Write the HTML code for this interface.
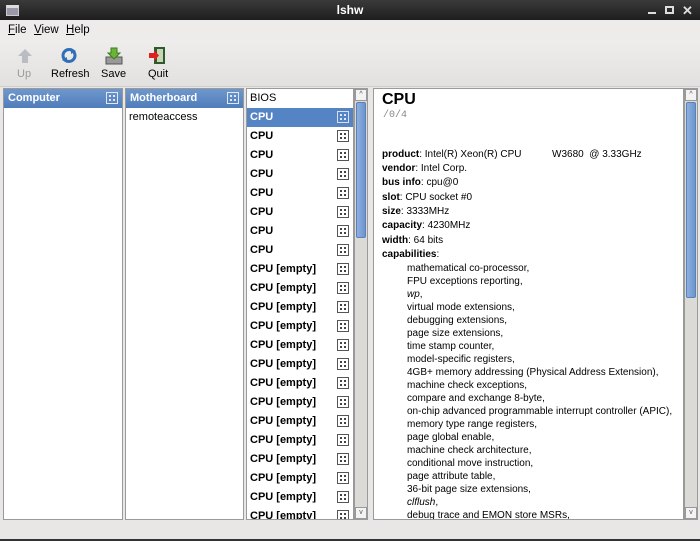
<!DOCTYPE html>
<html><head><style>
*{margin:0;padding:0;box-sizing:border-box}
body{width:700px;height:541px;background:#e8e7e6;font-family:"Liberation Sans",sans-serif;font-size:11px;color:#000;position:relative;overflow:hidden}
.a{position:absolute}
.title{left:0;top:0;width:700px;height:20px;background:linear-gradient(#3a3a3a,#1e1e1e);color:#fff;font-weight:bold;font-size:12px;text-align:center;line-height:20px}
.menu{top:20px;left:0;width:700px;height:20px;background:#edeceb}
.menu span{position:absolute;top:4px;font-size:11.5px}
.tb{top:40px;left:0;width:700px;height:47px;background:linear-gradient(#eeedec,#e2e1e0);border-bottom:1px solid #cfcdca}
.tb .l{position:absolute;top:28px;font-size:11px;text-align:center}
.pane{background:#fff;border:1px solid #9a9a9a}
.hdr{background:linear-gradient(#6f97cc,#4f7dbb);color:#fff;font-weight:bold;height:19px;line-height:19px;padding-left:4px;font-size:11px;position:relative}
.ic{position:absolute;width:12px;height:12px;border:1px solid #555;top:3px;background-color:#fff;background-image:radial-gradient(circle,#333 0,#333 1px,transparent 1.2px);background-size:4px 4px;background-position:1px 1px;background-clip:content-box;padding:1px}
.hdr .ic{border-color:#dfe7f3;background-color:transparent;background-image:radial-gradient(circle,#eef 0,#eef 1px,transparent 1.2px)}
.row{height:19px;line-height:19px;padding-left:3px;font-weight:bold;position:relative}
.row .ic{right:4px}
.sel{background:#5584c4;color:#fff}
.sb{background:#dcdad7;border:1px solid #9a9a9a}
.thumb{position:absolute;left:1px;width:10px;background:linear-gradient(90deg,#8fb0de,#6b95cf);border:1px solid #5a80b8;border-radius:2px}
.btn{position:absolute;left:0;width:12px;height:12px;background:#f3f3f3;border:1px solid #999;font-size:7px;text-align:center;line-height:10px;color:#555}
.d{position:absolute;left:382px;font-size:10px;white-space:pre}
.d b{font-weight:bold}
.c{position:absolute;left:407px;font-size:10px;white-space:nowrap}
</style></head><body>
<div class="a title">lshw
<div class="a" style="left:6px;top:5px;width:13px;height:11px;border:1px solid #ccc;background:#99a;border-top:3px solid #ddd"></div>
<div class="a" style="left:648px;top:12px;width:8px;height:2px;background:#ddd"></div>
<div class="a" style="left:665px;top:6px;width:9px;height:8px;border:2px solid #ddd"></div>
<div class="a" style="left:682px;top:1px;font-size:13px;color:#ddd">✕</div>
</div>
<div class="a menu"><span style="left:8px"><u>F</u>ile</span><span style="left:34px"><u>V</u>iew</span><span style="left:66px"><u>H</u>elp</span></div>
<div class="a tb">
<svg class="a" style="left:17px;top:8px" width="16" height="16"><path d="M8 1L15 8H11V15H5V8H1Z" fill="#b9bcc0"/></svg>
<div class="l" style="left:17px;color:#9a9a9a">Up</div>
<svg class="a" style="left:61px;top:7px" width="16" height="17"><circle cx="8" cy="8.5" r="6" fill="none" stroke="#2f6fb8" stroke-width="3"/><path d="M10 1L15 4 10 7Z M6 10L1 13 6 16Z" fill="#2f6fb8"/></svg>
<div class="l" style="left:51px">Refresh</div>
<svg class="a" style="left:105px;top:7px" width="18" height="18"><rect x="1" y="10" width="16" height="7" fill="#999" stroke="#555"/><path d="M6 1H12V6H15L9 12 3 6H6Z" fill="#6bb33a" stroke="#3d7d1c"/></svg>
<div class="l" style="left:101px">Save</div>
<svg class="a" style="left:148px;top:6px" width="18" height="19"><rect x="6" y="1" width="11" height="17" fill="#2e5a2e"/><rect x="9" y="3" width="6" height="13" fill="#c8d6b8"/><path d="M1 7H6V4L11 9.5 6 15V12H1Z" fill="#e02020"/></svg>
<div class="l" style="left:148px">Quit</div>
</div>

<div class="a pane" style="left:3px;top:88px;width:120px;height:432px">
<div class="hdr">Computer<div class="ic" style="right:4px"></div></div></div>
<div class="a pane" style="left:125px;top:88px;width:119px;height:432px">
<div class="hdr">Motherboard<div class="ic" style="right:4px"></div></div>
<div style="padding:3px 3px;font-size:11px">remoteaccess</div></div>

<div class="a pane" style="left:246px;top:88px;width:108px;height:432px;overflow:hidden">
<div class="row" style="font-weight:normal">BIOS</div>
<div class="row sel">CPU<div class="ic" style="border-color:#dde;background-color:transparent;background-image:radial-gradient(circle,#eef 0,#eef 1px,transparent 1.2px)"></div></div>
<div class="row">CPU<div class="ic"></div></div>
<div class="row">CPU<div class="ic"></div></div>
<div class="row">CPU<div class="ic"></div></div>
<div class="row">CPU<div class="ic"></div></div>
<div class="row">CPU<div class="ic"></div></div>
<div class="row">CPU<div class="ic"></div></div>
<div class="row">CPU<div class="ic"></div></div>
<div class="row">CPU [empty]<div class="ic"></div></div>
<div class="row">CPU [empty]<div class="ic"></div></div>
<div class="row">CPU [empty]<div class="ic"></div></div>
<div class="row">CPU [empty]<div class="ic"></div></div>
<div class="row">CPU [empty]<div class="ic"></div></div>
<div class="row">CPU [empty]<div class="ic"></div></div>
<div class="row">CPU [empty]<div class="ic"></div></div>
<div class="row">CPU [empty]<div class="ic"></div></div>
<div class="row">CPU [empty]<div class="ic"></div></div>
<div class="row">CPU [empty]<div class="ic"></div></div>
<div class="row">CPU [empty]<div class="ic"></div></div>
<div class="row">CPU [empty]<div class="ic"></div></div>
<div class="row">CPU [empty]<div class="ic"></div></div>
<div class="row">CPU [empty]<div class="ic"></div></div>
<div class="row">CPU [empty]<div class="ic"></div></div>
</div>
<div class="a sb" style="left:354px;top:88px;width:14px;height:432px">
<div class="btn" style="top:0">^</div>
<div class="thumb" style="top:13px;height:136px"></div>
<div class="btn" style="top:418px">v</div></div>

<div class="a pane" style="left:373px;top:88px;width:311px;height:432px"></div>
<div class="a sb" style="left:684px;top:88px;width:14px;height:432px">
<div class="btn" style="top:0">^</div>
<div class="thumb" style="top:13px;height:196px"></div>
<div class="btn" style="top:418px">v</div></div>

<div class="a" style="left:382px;top:91px;font-size:16px;font-weight:bold">CPU</div>
<div class="a" style="left:383px;top:110px;font-family:'Liberation Mono',monospace;font-size:10px;color:#888">/0/4</div>
<div class="d" style="top:149px"><b>product</b>: Intel(R) Xeon(R) CPU           W3680  @ 3.33GHz</div>
<div class="d" style="top:163px"><b>vendor</b>: Intel Corp.</div>
<div class="d" style="top:177px"><b>bus info</b>: cpu@0</div>
<div class="d" style="top:192px"><b>slot</b>: CPU socket #0</div>
<div class="d" style="top:206px"><b>size</b>: 3333MHz</div>
<div class="d" style="top:220px"><b>capacity</b>: 4230MHz</div>
<div class="d" style="top:235px"><b>width</b>: 64 bits</div>
<div class="d" style="top:249px"><b>capabilities</b>:</div>
<div class="a" style="left:0;top:263px;width:684px;height:256px;overflow:hidden">
<div class="c" style="top:0">mathematical co-processor,</div>
<div class="c" style="top:13px">FPU exceptions reporting,</div>
<div class="c" style="top:26px"><i>wp</i>,</div>
<div class="c" style="top:39px">virtual mode extensions,</div>
<div class="c" style="top:52px">debugging extensions,</div>
<div class="c" style="top:65px">page size extensions,</div>
<div class="c" style="top:78px">time stamp counter,</div>
<div class="c" style="top:91px">model-specific registers,</div>
<div class="c" style="top:104px">4GB+ memory addressing (Physical Address Extension),</div>
<div class="c" style="top:117px">machine check exceptions,</div>
<div class="c" style="top:130px">compare and exchange 8-byte,</div>
<div class="c" style="top:143px">on-chip advanced programmable interrupt controller (APIC),</div>
<div class="c" style="top:156px">memory type range registers,</div>
<div class="c" style="top:169px">page global enable,</div>
<div class="c" style="top:182px">machine check architecture,</div>
<div class="c" style="top:195px">conditional move instruction,</div>
<div class="c" style="top:208px">page attribute table,</div>
<div class="c" style="top:221px">36-bit page size extensions,</div>
<div class="c" style="top:234px"><i>clflush</i>,</div>
<div class="c" style="top:247px">debug trace and EMON store MSRs,</div>
</div>
<div class="a" style="left:0;top:539px;width:700px;height:2px;background:#333"></div>
</body></html>
